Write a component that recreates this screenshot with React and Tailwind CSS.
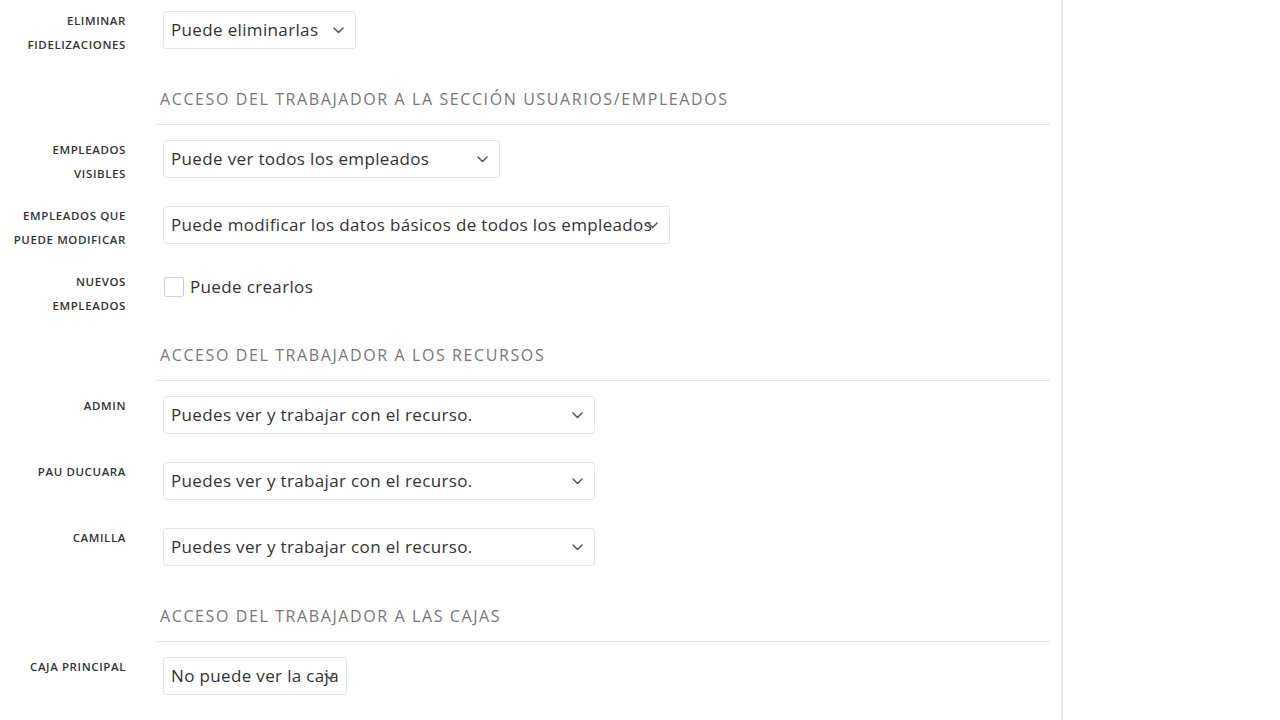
import React from 'react';

const font = { fontFamily: '"Open Sans", "Liberation Sans", sans-serif' };

const Chevron = () => (
  <svg width="11" height="7" viewBox="0 0 11 7" fill="none" className="shrink-0">
    <polyline points="1,1 5.5,5.5 10,1" stroke="#555" strokeWidth="1.5" strokeLinecap="round" strokeLinejoin="round" />
  </svg>
);

const Select = ({ value, width }) => (
  <div className={`relative h-[38px] ${width} rounded-[3px] border border-[#e6e6e6] bg-white overflow-hidden`}>
    <div className="h-full flex items-center pl-[7px] text-[17px] tracking-[0.35px] text-[#333] whitespace-nowrap">{value}</div>
    <div className="absolute right-[11px] top-[15px]">
      <Chevron />
    </div>
  </div>
);

const Label = ({ children }) => (
  <div className="w-[126px] shrink-0 -mt-[2px] text-right text-[11.5px] tracking-[0.6px] font-semibold uppercase leading-[24px] text-[#333] whitespace-nowrap">
    {children}
  </div>
);

const Row = ({ label, height, children }) => (
  <div className={`flex items-start ${height}`}>
    <Label>{label}</Label>
    <div className="ml-[37px]">{children}</div>
  </div>
);

const Heading = ({ children }) => (
  <div className="ml-[155px] w-[895px] border-b border-[#e6e6e6] pb-[13px] pl-[5px] text-[16px] tracking-[1.6px] leading-[24px] uppercase text-[#777]">
    {children}
  </div>
);

export default function App() {
  return (
    <div className="min-h-[720px] bg-white flex" style={font}>
      <div className="w-[1063px] border-r-2 border-[#ececec] pt-[11px]">
        <Row height="h-[76px]" label={<>Eliminar<br />fidelizaciones</>}>
          <Select value="Puede eliminarlas" width="w-[193px]" />
        </Row>

        <Heading>Acceso del trabajador a la sección usuarios/empleados</Heading>
        <div className="h-[15px]" />

        <Row height="h-[66px]" label={<>Empleados<br />visibles</>}>
          <Select value="Puede ver todos los empleados" width="w-[337px]" />
        </Row>
        <Row height="h-[66px]" label={<>Empleados que<br />puede modificar</>}>
          <Select value="Puede modificar los datos básicos de todos los empleados" width="w-[507px]" />
        </Row>
        <Row height="h-[71px]" label={<>Nuevos<br />empleados</>}>
          <label className="flex items-center mt-[2px] ml-[1px] gap-[6px] text-[17px] tracking-[0.35px] text-[#333]">
            <span className="w-[20px] h-[20px] border border-[#cfcfcf] rounded-[2px] bg-white" />
            Puede crearlos
          </label>
        </Row>

        <Heading>Acceso del trabajador a los recursos</Heading>
        <div className="h-[15px]" />

        <Row height="h-[66px]" label="Admin">
          <Select value="Puedes ver y trabajar con el recurso." width="w-[432px]" />
        </Row>
        <Row height="h-[66px]" label="Pau Ducuara">
          <Select value="Puedes ver y trabajar con el recurso." width="w-[432px]" />
        </Row>
        <Row height="h-[76px]" label="Camilla">
          <Select value="Puedes ver y trabajar con el recurso." width="w-[432px]" />
        </Row>

        <Heading>Acceso del trabajador a las cajas</Heading>
        <div className="h-[15px]" />

        <Row height="h-[66px]" label="Caja principal">
          <Select value="No puede ver la caja" width="w-[184px]" />
        </Row>
      </div>
      <div className="flex-1" />
    </div>
  );
}
